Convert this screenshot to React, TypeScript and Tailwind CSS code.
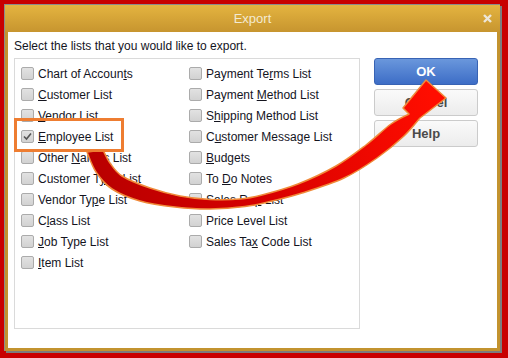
import type { ReactNode } from 'react'

type Item = { label: ReactNode; checked?: boolean }
type Pt = [number, number]

const leftItems: Item[] = [
  { label: <>Chart of Accoun<u>t</u>s</> },
  { label: <><u>C</u>ustomer List</> },
  { label: <><u>V</u>endor List</> },
  { label: <><u>E</u>mployee List</>, checked: true },
  { label: <>Other <u>N</u>ames List</> },
  { label: <>Customer T<u>y</u>pe List</> },
  { label: <>Vendor Ty<u>p</u>e List</> },
  { label: <>C<u>l</u>ass List</> },
  { label: <><u>J</u>ob Type List</> },
  { label: <><u>I</u>tem List</> },
]

const rightItems: Item[] = [
  { label: <>Payment Te<u>r</u>ms List</> },
  { label: <>Payment <u>M</u>ethod List</> },
  { label: <>S<u>h</u>ipping Method List</> },
  { label: <>C<u>u</u>stomer Message List</> },
  { label: <><u>B</u>udgets</> },
  { label: <>To <u>D</u>o Notes</> },
  { label: <>Sales Re<u>p</u> List</> },
  { label: <>Price Level List</> },
  { label: <>Sales Ta<u>x</u> Code List</> },
]

// 矢印の外側と内側の輪郭
const outer: Pt[] = [[87, 152], [96, 172], [112, 189], [140, 201], [175, 207], [210, 209], [245, 206.5], [270, 201.5], [302, 193], [344, 178], [377, 158], [404, 136], [420, 118]]
const inner: Pt[] = [[103, 150], [110, 163], [122, 176], [150, 188], [180, 196], [210, 199.5], [240, 199], [262, 195], [298, 184], [336, 166], [366, 145], [391, 124], [409, 114]]

// Catmull-Rom で滑らかな線に
function smooth(pts: Pt[]) {
  let d = ''
  for (let i = 0; i < pts.length - 1; i++) {
    const p0 = pts[i - 1] ?? pts[i]
    const p1 = pts[i]
    const p2 = pts[i + 1]
    const p3 = pts[i + 2] ?? p2
    const c1x = p1[0] + (p2[0] - p0[0]) / 6
    const c1y = p1[1] + (p2[1] - p0[1]) / 6
    const c2x = p2[0] - (p3[0] - p1[0]) / 6
    const c2y = p2[1] - (p3[1] - p1[1]) / 6
    d += ` C${c1x.toFixed(1)} ${c1y.toFixed(1)} ${c2x.toFixed(1)} ${c2y.toFixed(1)} ${p2[0]} ${p2[1]}`
  }
  return d
}

const innerRev = [...inner].reverse()
const arrowPath =
  `M${outer[0][0]} ${outer[0][1]}` +
  smooth(outer) +
  ' L446 98 L426 80 L403 108' +
  ` L${innerRev[0][0]} ${innerRev[0][1]}` +
  smooth(innerRev) +
  ' Z'

function Row({ item }: { item: Item }) {
  return (
    <div className="h-[21px] flex items-center">
      <span className="w-[13px] h-[13px] rounded-[2px] border border-[#ababab] bg-gradient-to-b from-[#e2e2e2] to-[#d2d2d2] flex items-center justify-center shrink-0">
        {item.checked && (
          <svg width="9" height="9" viewBox="0 0 9 9">
            <path d="M1 4.5 L3.5 7 L8 1.5" fill="none" stroke="#555" strokeWidth="1.6" />
          </svg>
        )}
      </span>
      <span className="ml-[4px] whitespace-nowrap">{item.label}</span>
    </div>
  )
}

export default function App() {
  return (
    <div className="relative w-[508px] h-[358px] overflow-hidden bg-[#c80000] font-['Liberation_Sans',Arial,sans-serif]">
      {/* ダイアログ */}
      <div className="ml-[4px] mt-[4px] w-[496px] h-[347px] border-l border-t border-[#8c8c8c] bg-[#c3932f] shadow-[2px_2px_0_#7c7c7c] flex flex-col px-[3px] pb-[3px]">
        {/* タイトルバー */}
        <div className="-mx-[3px] h-[27px] shrink-0 bg-gradient-to-b from-[#e4b440] to-[#c7952f] relative flex items-center justify-center">
          <span className="text-[13px] text-[#f3ead2]">Export</span>
          <svg className="absolute right-[8px] top-[9px]" width="9" height="9" viewBox="0 0 9 9">
            <path d="M1 1 L8 8 M8 1 L1 8" stroke="#ece6d8" strokeWidth="2.4" />
          </svg>
        </div>

        {/* 本体 */}
        <div className="flex-1 bg-white px-[6px] pt-[6px] text-[12px] leading-[16px] text-[#14141e]">
          <p>Select the lists that you would like to export.</p>
          <div className="flex mt-[4px]">
            <div className="w-[346px] h-[271px] border border-[#dadada] pt-[4px] pl-[6px] flex">
              <div className="w-[168px] flex flex-col">
                {leftItems.map((it, i) => <Row key={i} item={it} />)}
              </div>
              <div className="flex flex-col">
                {rightItems.map((it, i) => <Row key={i} item={it} />)}
              </div>
            </div>

            {/* ボタン */}
            <div className="ml-[14px] w-[104px] flex flex-col gap-[4px] text-[13px] font-bold">
              <button className="h-[27px] rounded-[3px] border border-[#3863b4] bg-gradient-to-b from-[#6a97dc] to-[#3d6dc6] text-white">OK</button>
              <button className="h-[27px] rounded-[3px] border border-[#cbcbcb] bg-gradient-to-b from-[#fafafa] to-[#ececec] text-[#4a4a4a]">Cancel</button>
              <button className="h-[27px] rounded-[3px] border border-[#cbcbcb] bg-gradient-to-b from-[#fafafa] to-[#ececec] text-[#4a4a4a]">Help</button>
            </div>
          </div>
        </div>
      </div>

      {/* 矢印 */}
      <svg className="absolute left-0 top-0 pointer-events-none" width="508" height="358" viewBox="0 0 508 358">
        <defs>
          <linearGradient id="arrowFill" x1="90" y1="180" x2="430" y2="90" gradientUnits="userSpaceOnUse">
            <stop offset="0" stopColor="#b80000" />
            <stop offset="0.45" stopColor="#d60000" />
            <stop offset="1" stopColor="#ff0d00" />
          </linearGradient>
        </defs>
        <path d={arrowPath} fill="url(#arrowFill)" stroke="#f08a3a" strokeWidth="1.5" strokeLinejoin="round" />
      </svg>

      {/* 枠 */}
      <div className="absolute left-[14px] top-[118px] w-[110px] h-[34px] border-[3px] border-[#ee7d31]" />
    </div>
  )
}
